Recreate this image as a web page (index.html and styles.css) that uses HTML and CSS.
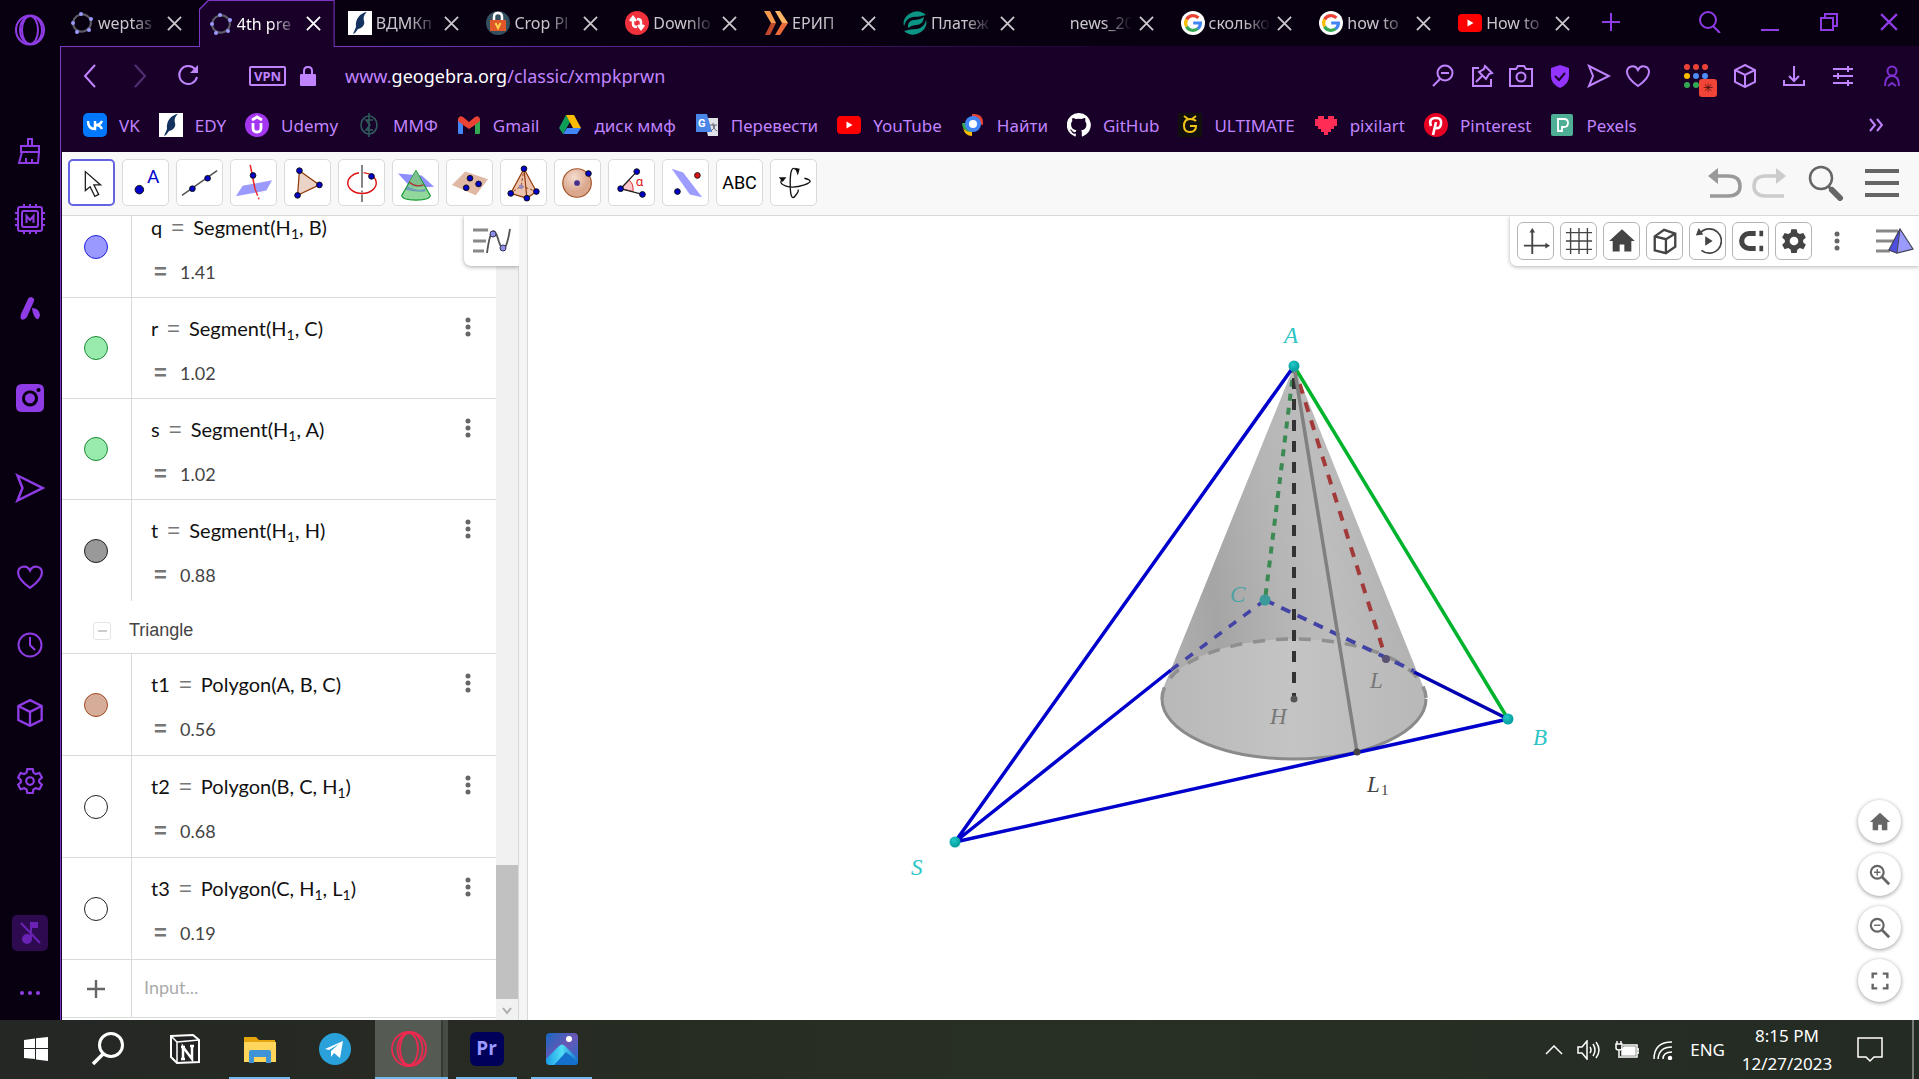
FILE: index.html
```html
<!DOCTYPE html>
<html lang="en">
<head>
<meta charset="utf-8">
<title>4th pre</title>
<link rel="stylesheet" href="styles.css">
</head>
<body>
<svg class="defs" aria-hidden="true">
  <symbol id="x" viewBox="0 0 16 16"><path d="M1 1l14 14M15 1L1 15"/></symbol>
  <symbol id="ring" viewBox="0 0 24 24"><ellipse cx="12" cy="12" rx="9" ry="8.500" fill="none" stroke="#5c5c66" stroke-width="2.200" transform="rotate(-15 12 12)"/><g fill="#9a9aff"><circle cx="11" cy="3" r="2"/><circle cx="21" cy="8" r="2"/><circle cx="19" cy="19" r="2"/><circle cx="7" cy="21" r="2"/><circle cx="3" cy="12" r="2"/></g></symbol>
  <symbol id="feather" viewBox="0 0 24 24"><path fill="#fff" d="M0 0h24v24H0z"/><path fill="#14325f" d="M19 1C12 2 7 8 8 16l-3 7 2-1 3-4c5-1 7-5 6-8-1-4 0-6 3-9z"/></symbol>
  <symbol id="google" viewBox="0 0 24 24"><circle cx="12" cy="12" r="12" fill="#fff"/><g fill="none" stroke-width="3.2"><path stroke="#ea4335" d="M5.6 8.4a7.4 7.4 0 0 1 11.8-1.6"/><path stroke="#fbbc05" d="M5.6 8.4a7.4 7.4 0 0 0 0 7.2"/><path stroke="#34a853" d="M5.6 15.6a7.4 7.4 0 0 0 11.2 2"/><path stroke="#4285f4" d="M12.2 12h7.2c0 2.400-1 4.400-2.700 5.700"/></g></symbol>
  <symbol id="youtube" viewBox="0 0 24 24"><rect y="3" width="24" height="18" rx="4" fill="red"/><path fill="#fff" d="M9.500 8.500v7l6-3.500z"/></symbol>
  <symbol id="plane" viewBox="0 0 24 24"><path d="M2 2l20 10L2 22l4-10z"/></symbol>
  <symbol id="heart" viewBox="0 0 24 24"><path d="M12 22C5 17 1 13 1 8c0-6 8-8 11-2 3-6 11-4 11 2 0 5-4 9-11 14z"/></symbol>
  <symbol id="cube" viewBox="0 0 24 24"><path d="M12 1l10 5v12l-10 5-10-5V6zM2 6l10 5 10-5M12 11v12"/></symbol>
  <symbol id="home" viewBox="0 0 24 24"><path d="M10 21v-6h4v6h6v-9h3L12 2 1 12h3v9z"/></symbol>
  <symbol id="dots" viewBox="0 0 6 20"><circle cx="3" cy="3" r="2.500"/><circle cx="3" cy="10" r="2.500"/><circle cx="3" cy="17" r="2.500"/></symbol>
  <symbol id="gear" viewBox="0 0 24 24"><path d="M9.500 1h5l.7 3.300 2.200 1.300 3.300-1 2.300 4.200-2.500 2.300v2l2.500 2.300-2.300 4.200-3.300-1-2.200 1.300-.7 3.300h-5l-.7-3.300-2.200-1.300-3.300 1L1 15.400l2.500-2.300v-2L1 8.800l2.300-4.200 3.300 1 2.200-1.300z"/></symbol>
</svg>

<div class="browser">
  <nav class="rail" aria-label="Sidebar">
    <button class="rail-top" aria-label="Opera menu"><svg width="32" height="32" viewBox="0 0 32 32"><ellipse cx="16" cy="16" rx="14" ry="14.500"/><ellipse cx="16" cy="16" rx="8" ry="14"/><ellipse cx="17" cy="16" rx="11" ry="14"/></svg></button>
    <div class="rail-group">
      <button aria-label="Cleaner"><svg width="26" height="26" viewBox="0 0 26 26"><path d="M11 8V1h4v7M4 8h18v6H4zM5 14L2 25h19l1-11M9 25v-5M15 25v-4"/></svg></button>
      <button aria-label="GX Control"><svg width="32" height="32" viewBox="0 0 32 32"><rect x="4" y="4" width="24" height="24" rx="2"/><rect x="8" y="8" width="16" height="16" rx="2"/><path d="M10 1v3M16 1v3M22 1v3M10 28v3M16 28v3M22 28v3M1 10h3M1 16h3M1 22h3M28 10h3M28 16h3M28 22h3M12.500 20v-7l3.500 4 3.500-4v7"/></svg></button>
    </div>
    <div class="rail-group apps">
      <button aria-label="Aria"><svg class="solid" width="24" height="26" viewBox="0 0 24 26"><path d="M13 2q4 1 3 4L9 22q-3 4-6 2-1-2 0-5L10 4q1-2 3-2zM14 13q7 0 8 7-1 5-3 4-4-2-5-11z"/></svg></button>
      <button aria-label="Instagram"><svg class="solid" width="28" height="28" viewBox="0 0 28 28"><path fill-rule="evenodd" d="M6 0h16q6 0 6 6v16q0 6-6 6H6q-6 0-6-6V6q0-6 6-6zm8 6.500a8 8 0 1 0 .1 0zm0 2.800a5 5 0 1 1-.1 0zM22.500 4a2 2 0 1 0 .1 0z"/></svg></button>
      <button aria-label="My Flow"><svg width="30" height="30"><use href="#plane"/></svg></button>
    </div>
    <div class="rail-group">
      <button aria-label="Favourites"><svg width="26" height="26"><use href="#heart"/></svg></button>
      <button aria-label="History"><svg width="26" height="26" viewBox="0 0 26 26"><circle cx="13" cy="13" r="11.500"/><path d="M13 5v8l5 5"/></svg></button>
      <button aria-label="Extensions"><svg width="28" height="28"><use href="#cube"/></svg></button>
      <button aria-label="Settings"><svg width="26" height="26" viewBox="0 0 24 24"><use href="#gear"/><circle cx="12" cy="12" r="3.500"/></svg></button>
    </div>
    <div class="rail-bottom">
      <button class="music" aria-label="Music off"><svg width="24" height="24" viewBox="0 0 24 24"><path d="M3 2l19 20"/><circle cx="9" cy="18" r="4" fill="currentColor"/><path fill="currentColor" d="M13 18V2h6v4h-6"/></svg></button>
      <button class="more" aria-label="More"><svg class="solid" width="24" height="8" viewBox="0 0 24 8"><circle cx="4" cy="4" r="2"/><circle cx="12" cy="4" r="2"/><circle cx="20" cy="4" r="2"/></svg></button>
    </div>
  </nav>

  <div class="window">
    <header class="tabstrip">
      <div class="tabs">
        <div class="tab"><svg><use href="#ring"/></svg><button class="title">weptas</button><button class="close" aria-label="Close tab"><svg><use href="#x"/></svg></button></div>
        <div class="tab active"><svg><use href="#ring"/></svg><button class="title">4th pre</button><button class="close" aria-label="Close tab"><svg><use href="#x"/></svg></button></div>
        <div class="tab"><svg><use href="#feather"/></svg><button class="title">ВДМКп</button><button class="close" aria-label="Close tab"><svg><use href="#x"/></svg></button></div>
        <div class="tab"><svg viewBox="0 0 24 24"><circle cx="12" cy="12" r="12" fill="#34505e"/><path d="M8 10V6q0-4 4-4t4 4v4" fill="none" stroke="#fff" stroke-width="2.500"/><rect x="4" y="9" width="16" height="11" fill="#e0582a"/><path d="M9.500 12l2.500 5 2.500-5" fill="none" stroke="#ffd34d" stroke-width="2"/></svg><button class="title">Crop Pl</button><button class="close" aria-label="Close tab"><svg><use href="#x"/></svg></button></div>
        <div class="tab"><svg viewBox="0 0 24 24"><circle cx="12" cy="12" r="12" fill="#f0313c"/><path d="M8 7v6q0 3 4 3M16 17v-6q0-3-4-3M5 10l3-4 3 4M13 14l3 4 3-4" fill="none" stroke="#fff" stroke-width="2.500"/></svg><button class="title">Downlo</button><button class="close" aria-label="Close tab"><svg><use href="#x"/></svg></button></div>
        <div class="tab"><svg viewBox="0 0 24 24"><path fill="#f59a4c" d="M0 0h6l6 12H7z"/><path fill="#c2492c" d="M7 12h5L6 24H1z"/><path fill="#ffb765" d="M11 0h5l8 12h-6z"/><path fill="#ed6a3a" d="M18 12h6l-8 12h-5z"/></svg><button class="title">ЕРИП</button><button class="close" aria-label="Close tab"><svg><use href="#x"/></svg></button></div>
        <div class="tab"><svg viewBox="0 0 24 24"><path fill="#0c9484" d="M23 4Q15-3 6 3-1 8 1 15q2-8 9-9 7 0 13-2zM1 20q8 7 17 1 7-5 5-12-2 8-9 9-7 0-13 2zM5 14q1-5 7-5 5 0 9-3-1 8-8 8-4 0-8 3z"/></svg><button class="title">Платеж</button><button class="close" aria-label="Close tab"><svg><use href="#x"/></svg></button></div>
        <div class="tab"><svg></svg><button class="title">news_20</button><button class="close" aria-label="Close tab"><svg><use href="#x"/></svg></button></div>
        <div class="tab"><svg><use href="#google"/></svg><button class="title">сколько</button><button class="close" aria-label="Close tab"><svg><use href="#x"/></svg></button></div>
        <div class="tab"><svg><use href="#google"/></svg><button class="title">how to</button><button class="close" aria-label="Close tab"><svg><use href="#x"/></svg></button></div>
        <div class="tab"><svg><use href="#youtube"/></svg><button class="title">How to</button><button class="close" aria-label="Close tab"><svg><use href="#x"/></svg></button></div>
      </div>
      <div class="window-controls">
        <button class="new-tab" aria-label="New tab"><svg width="18" height="18" viewBox="0 0 18 18"><path d="M9 0v18M0 9h18"/></svg></button>
        <button aria-label="Search tabs"><svg width="22" height="22" viewBox="0 0 22 22"><circle cx="9" cy="9" r="8"/><path d="M14 15l7 7"/></svg></button>
        <button aria-label="Minimise"><svg width="18" height="18" viewBox="0 0 18 18"><path d="M0 17h18"/></svg></button>
        <button aria-label="Restore"><svg width="18" height="18" viewBox="0 0 18 18"><path d="M1 5h12v12H1zM5 5V1h12v12h-4"/></svg></button>
        <button aria-label="Close"><svg width="18" height="18"><use href="#x"/></svg></button>
      </div>
    </header>

    <div class="content">
      <div class="address-bar">
        <button class="back" aria-label="Back"><svg width="24" height="24" viewBox="0 0 24 24"><path d="M17 1L7 12l10 11"/></svg></button>
        <button class="forward" aria-label="Forward"><svg width="24" height="24" viewBox="0 0 24 24"><path d="M7 1l10 11L7 23"/></svg></button>
        <button class="reload" aria-label="Reload"><svg width="24" height="24" viewBox="0 0 24 24"><path d="M19 5a9 9 0 1 0 2 8"/><path fill="currentColor" stroke="none" d="M22 1v8h-8z"/></svg></button>
        <button class="vpn">VPN</button>
        <svg class="lock" width="16" height="20" viewBox="0 0 16 20"><rect y="8" width="16" height="12" rx="1" fill="currentColor" stroke="none"/><path d="M4 9V5q0-4 4-4t4 4v4"/></svg>
        <a class="url" href="#">www.<b>geogebra.org</b>/classic/xmpkprwn</a>
        <div class="page-actions">
          <button aria-label="Zoom"><svg viewBox="0 0 24 24"><circle cx="14" cy="9" r="7.500"/><path d="M9 15l-7 7M10 9h8"/></svg></button>
          <button aria-label="Pin"><svg viewBox="0 0 24 24"><path d="M9 4H3v18h18v-7M15 2l7 7-3 1-3 5-7-7 5-3zM12 12l-6 6"/></svg></button>
          <button aria-label="Snapshot"><svg viewBox="0 0 24 24"><path d="M1 5h6l2-3h6l2 3h6v17H1z"/><circle cx="12" cy="13" r="4.500"/></svg></button>
          <button aria-label="Ad blocker" class="shield"><svg viewBox="0 0 24 24"><path fill="#9333ff" stroke="none" d="M12 1l9 3v8q0 8-9 12-9-4-9-12V4z"/><path stroke="#180028" d="M7 12l4 4 6-7"/></svg></button>
          <button aria-label="Send"><svg><use href="#plane"/></svg></button>
          <button aria-label="Bookmark"><svg><use href="#heart"/></svg></button>
        </div>
        <div class="extensions">
          <button class="apps-grid" aria-label="Apps"><svg viewBox="0 0 24 24" stroke="none"><g fill="#ea4335"><circle cx="3" cy="3" r="3"/><circle cx="12" cy="3" r="3"/><circle cx="21" cy="3" r="3"/></g><circle cx="3" cy="12" r="3" fill="#fbbc05"/><g fill="#4e8df5"><circle cx="12" cy="12" r="3"/><circle cx="21" cy="12" r="3"/></g><g fill="#34a853"><circle cx="3" cy="21" r="3"/><circle cx="12" cy="21" r="3"/></g></svg><span class="badge">✳</span></button>
          <button aria-label="Extensions"><svg><use href="#cube"/></svg></button>
          <button aria-label="Downloads"><svg viewBox="0 0 24 24"><path d="M12 2v15M7 12l5 5 5-5M2 16v5h20v-5"/></svg></button>
          <button aria-label="Easy setup"><svg viewBox="0 0 24 24"><path d="M2 5h20M2 12h20M2 19h20M17 2v6M7 9v6M17 16v6" /></svg></button>
          <button class="person" aria-label="Profile"><svg viewBox="0 0 24 24"><circle cx="12" cy="7" r="4.500"/><path d="M5 22q0-10 7-10t7 10M8 22l4-3 4 3"/></svg></button>
        </div>
      </div>

      <nav class="bookmarks" aria-label="Bookmarks">
        <a href="#"><svg viewBox="0 0 24 24"><rect width="24" height="24" rx="5" fill="#07f"/><path d="M5 8q0 8 7 8V8M19 8q-2 4-6 4 4 0 6 4" fill="none" stroke="#fff" stroke-width="2.500"/></svg>VK</a>
        <a href="#"><svg><use href="#feather"/></svg>EDY</a>
        <a href="#"><svg viewBox="0 0 24 24"><circle cx="12" cy="12" r="12" fill="#a435f0"/><path d="M8 10v5q0 4 4 4t4-4v-5M7 7l5-3 5 3" fill="none" stroke="#fff" stroke-width="2.800"/></svg>Udemy</a>
        <a href="#"><svg viewBox="0 0 24 24"><g fill="none" stroke="#2f5b5c" stroke-width="1.600"><ellipse cx="12" cy="12" rx="8" ry="9"/><path d="M12 0v24M16 7H9l4 5-4 5h7"/></g></svg>ММФ</a>
        <a href="#"><svg viewBox="0 0 24 24"><path fill="#4285f4" d="M1 7l5 3v11H2q-1 0-1-1z"/><path fill="#34a853" d="M18 10l5-3v13q0 1-1 1h-4z"/><path fill="#ea4335" d="M1 8V6q1-4 5-2l6 5 6-5q4-2 5 2v2l-5 4-6 4-6-4z"/></svg>Gmail</a>
        <a href="#"><svg viewBox="0 0 24 24"><path fill="#0f9d58" d="M8 2L1 15l4 6L12 9z"/><path fill="#fbbc05" d="M8 2h8l7 13h-8z"/><path fill="#4285f4" d="M5 21l4-6h14l-4 6z"/></svg>диск ммф</a>
        <a href="#"><svg viewBox="0 0 24 24"><path fill="#dfe3e8" d="M9 5h14v18H13z"/><path fill="#4a86e8" d="M1 1h11l5 18H1z"/><text class="glyph" x="3" y="14" fill="#fff">G</text><path d="M15 12h7M18 10v2q1 5 4 6M20 12q-1 4-4 6" fill="none" stroke="#667"/></svg>Перевести</a>
        <a href="#"><svg><use href="#youtube"/></svg>YouTube</a>
        <a href="#"><svg viewBox="0 0 24 24"><path fill="#ea4335" d="M11 1q12-1 11 11l-4-1q-1-6-7-7z"/><path fill="#34a853" d="M1 10h5q0 5 5 6v4Q1 18 1 10z"/><path fill="#fbbc05" d="M2 15q3 4 9 4v4Q4 23 2 15z"/><circle cx="12" cy="11" r="8" fill="#4285f4"/><circle cx="12" cy="11" r="4" fill="#fff"/></svg>Найти</a>
        <a href="#"><svg viewBox="0 0 24 24"><path fill="#fff" d="M12 0A12 12 0 0 0 8 23.400c.6.1.8-.3.8-.6v-2.200c-3.300.7-4-1.500-4-1.500-.6-1.400-1.400-1.800-1.400-1.800-1-.7.1-.7.1-.7 1.200.1 1.800 1.200 1.800 1.200 1.100 1.900 2.900 1.300 3.500 1 .1-.8.400-1.300.8-1.600-2.700-.3-5.500-1.300-5.500-5.900 0-1.300.5-2.400 1.300-3.200-.2-.4-.6-1.600.1-3.200 0 0 1-.3 3.300 1.200a11 11 0 0 1 6 0C17.100 4.700 18 5 18 5c.7 1.600.3 2.800.1 3.200.8.800 1.300 1.900 1.300 3.200 0 4.600-2.800 5.600-5.500 5.900.5.400.9 1.100.9 2.200v3.300c0 .3.200.7.8.6A12 12 0 0 0 12 0z"/></svg>GitHub</a>
        <a href="#"><svg viewBox="0 0 24 24"><path fill="#11100e" d="M0 0h24v24H0z"/><path d="M18 8q-2-2-6-2-6 0-6 7 0 6 6 6t6-6h-6M6 3l4 3M18 3l-4 3" fill="none" stroke="#f2c318" stroke-width="2"/></svg>ULTIMATE</a>
        <a href="#"><svg viewBox="0 0 24 24"><path fill="#ff2d55" d="M4 3h6v3h4V3h6v3h3v7h-3v3h-3v3h-3v3h-4v-3H7v-3H4v-3H1V6h3z"/></svg>pixilart</a>
        <a href="#"><svg viewBox="0 0 24 24"><circle cx="12" cy="12" r="12" fill="#e60023"/><path d="M7 13q-3-8 5-8 6 0 5 6-1 5-5 4l-1-1M12 9L9 22" fill="none" stroke="#fff" stroke-width="2.600"/></svg>Pinterest</a>
        <a href="#"><svg viewBox="0 0 24 24"><rect x="1" y="1" width="22" height="22" rx="2" fill="#4fae96"/><path d="M8 18V6h6q4 0 4 4t-4 4h-2v4z" fill="none" stroke="#fff" stroke-width="1.800"/></svg>Pexels</a>
        <button class="overflow" aria-label="More bookmarks"><svg width="14" height="14" viewBox="0 0 14 14"><path d="M1 1l5 6-5 6M8 1l5 6-5 6"/></svg></button>
      </nav>

      <main class="geogebra">
        <div class="toolbar">
          <div class="tools">
            <button class="tool selected" aria-label="Move"><svg viewBox="0 0 40 40"><path d="M13 8v20l5-4 5 10 4-2-5-10h7z" fill="#fff" stroke="#222" stroke-width="1.400"/></svg></button>
            <button class="tool" aria-label="Point"><svg viewBox="0 0 40 40"><circle cx="13" cy="27" r="4.500" class="pt"/><text x="21" y="20" class="tool-a">A</text></svg></button>
            <button class="tool" aria-label="Line"><svg viewBox="0 0 40 40"><path d="M1 33L38 7" stroke="#555" stroke-width="1.600"/><circle cx="12" cy="26" r="3" class="pt"/><circle cx="28" cy="15" r="3" class="pt"/></svg></button>
            <button class="tool" aria-label="Perpendicular line"><svg viewBox="0 0 40 40"><path d="M8 23l31-6-6 11-32 6z" fill="#9a9aff"/><path d="M16 1l5 25" stroke="#e22" stroke-width="1.600"/><path d="M21 26l5 13" stroke="#e22" stroke-width="1.400" stroke-dasharray="8 2 2 2"/><circle cx="19" cy="12" r="3" class="pt"/></svg></button>
            <button class="tool" aria-label="Polygon"><svg viewBox="0 0 40 40"><path d="M11 7l21 15L9 33z" fill="#ecd3c7" stroke="#933b0c" stroke-width="1.300"/><circle cx="11" cy="7" r="3" class="pt"/><circle cx="32" cy="22" r="3" class="pt"/><circle cx="9" cy="33" r="3" class="pt"/></svg></button>
            <button class="tool" aria-label="Circle with axis"><svg viewBox="0 0 40 40"><path d="M20 1v24M20 28v2M20 32v8" stroke="#555" stroke-width="1.500"/><ellipse cx="20" cy="20" rx="15" ry="11" fill="none" stroke="#d11" stroke-width="1.500" stroke-dasharray="58 5"/><circle cx="30" cy="13" r="3" class="pt"/></svg></button>
            <button class="tool" aria-label="Intersect surfaces"><svg viewBox="0 0 40 40"><path d="M1 10l25 2 13 12-24 1z" fill="#8f8fff"/><path d="M20 7L5 33q0 5 15 5t15-5z" fill="#7fd089" fill-opacity=".85" stroke="#159a2e" stroke-width="1.200"/><path d="M13 19l7-12 8 15q-8 5-15-3z" fill="#7fc08f"/><path d="M13 19q6 6 15 3" fill="none" stroke="#a33" stroke-width="1.400"/><path d="M11 23q8 6 19 3v3q-11 1-21-2z" fill="#5879c9" opacity=".6"/></svg></button>
            <button class="tool" aria-label="Plane through 3 points"><svg viewBox="0 0 40 40"><path d="M15 8l24 8-13 17-25-11z" fill="#dfb9a5"/><circle cx="20" cy="15" r="3" class="pt"/><circle cx="16" cy="25" r="3" class="pt"/><circle cx="29" cy="21" r="3" class="pt"/></svg></button>
            <button class="tool" aria-label="Pyramid"><svg viewBox="0 0 40 40"><path d="M20 5L6 31l17 5 10-7z" fill="#ecc4ae" stroke="#933b0c" stroke-width="1.300"/><path d="M20 5l3 31" stroke="#933b0c" stroke-width="1.300"/><path d="M20 5l-3 18-11 8M17 23l16 6" fill="none" stroke="#933b0c" stroke-dasharray="3 2"/><circle cx="17" cy="24" r="2.500" fill="#9a8ab8"/><circle cx="20" cy="5" r="3" class="pt"/><circle cx="6" cy="31" r="3" class="pt"/><circle cx="33" cy="29" r="3" class="pt"/><circle cx="23" cy="36" r="3" class="pt"/></svg></button>
            <button class="tool" aria-label="Sphere"><svg viewBox="0 0 40 40"><defs><radialGradient id="sph" cx=".4" cy=".3"><stop offset="0" stop-color="#f4ddd0"/><stop offset="1" stop-color="#dba88e"/></radialGradient></defs><circle cx="19" cy="20" r="15" fill="url(#sph)" stroke="#a4552b" stroke-width="1.300"/><circle cx="19" cy="20" r="3" fill="#43308c"/><circle cx="31" cy="10" r="3" class="pt"/></svg></button>
            <button class="tool" aria-label="Angle"><svg viewBox="0 0 40 40"><path d="M8 26l9-9q5 4 4 12z" fill="#fcc9cc" stroke="#d22"/><path d="M25 8L8 26l23 6" fill="none" stroke="#222" stroke-width="1.400"/><text x="24" y="23" class="alpha">α</text><circle cx="25" cy="8" r="3" class="pt"/><circle cx="8" cy="26" r="3" class="pt"/><circle cx="31" cy="32" r="3" class="pt"/></svg></button>
            <button class="tool" aria-label="Reflect about plane"><svg viewBox="0 0 40 40"><path d="M5 5l12 4 20 26-13-3z" fill="#9d9dff"/><circle cx="32" cy="12" r="3" fill="#d11" stroke="#222"/><circle cx="11" cy="29" r="3" class="pt"/></svg></button>
            <button class="tool abc">ABC</button>
            <button class="tool" aria-label="Rotate 3D view"><svg viewBox="0 0 40 40"><g fill="none" stroke="#111" stroke-width="1.400"><path d="M22 6q-6-6-6 14t5 14 3-7M8 16q-5 4 3 7t20-1 0-7"/></g><path d="M4 14h8l-4 5zM21 4l5 1-2 7z" fill="#111"/></svg></button>
          </div>
          <div class="main-actions">
            <button aria-label="Undo"><svg width="34" height="32" viewBox="0 0 34 32"><path d="M2 29h18q12 0 12-10T20 9H9" fill="none" stroke="#999" stroke-width="3.500"/><path d="M0 9l10-8v16z" fill="#999"/></svg></button>
            <button aria-label="Redo"><svg width="34" height="32" viewBox="0 0 34 32"><path d="M32 29H14Q2 29 2 19T14 9h11" fill="none" stroke="#ccc" stroke-width="3.500"/><path d="M34 9L24 1v16z" fill="#ccc"/></svg></button>
            <button class="find" aria-label="Search"><svg width="36" height="36" viewBox="0 0 36 36"><circle cx="13" cy="13" r="11" fill="none" stroke="#666" stroke-width="2.500"/><path d="M20 21l4 4" stroke="#666" stroke-width="3"/><path d="M24 25l8 8" stroke="#666" stroke-width="6" stroke-linecap="round"/></svg></button>
            <button aria-label="Menu"><svg width="34" height="30" viewBox="0 0 34 30"><path d="M0 3h34M0 15h34M0 27h34" stroke="#666" stroke-width="4"/></svg></button>
          </div>
        </div>

        <div class="views">
          <section class="algebra" aria-label="Algebra view">
            <div class="list">
              <ul class="rows">
                <li class="row segment"><div class="mark"><button class="marble blue" aria-label="Toggle q"></button></div><div class="expr"><p class="def">q <i>=</i> Segment(H<sub>1</sub>, B)</p><p class="val"><b>=</b>1.41</p></div></li>
                <li class="row segment"><div class="mark"><button class="marble green" aria-label="Toggle r"></button></div><div class="expr"><p class="def">r <i>=</i> Segment(H<sub>1</sub>, C)</p><p class="val"><b>=</b>1.02</p></div><button class="kebab" aria-label="More"><svg><use href="#dots"/></svg></button></li>
                <li class="row segment"><div class="mark"><button class="marble green" aria-label="Toggle s"></button></div><div class="expr"><p class="def">s <i>=</i> Segment(H<sub>1</sub>, A)</p><p class="val"><b>=</b>1.02</p></div><button class="kebab" aria-label="More"><svg><use href="#dots"/></svg></button></li>
                <li class="row segment last"><div class="mark"><button class="marble grey" aria-label="Toggle t"></button></div><div class="expr"><p class="def">t <i>=</i> Segment(H<sub>1</sub>, H)</p><p class="val"><b>=</b>0.88</p></div><button class="kebab" aria-label="More"><svg><use href="#dots"/></svg></button></li>
                <li class="group"><button class="collapse" aria-label="Collapse Triangle"></button><h2>Triangle</h2></li>
                <li class="row"><div class="mark"><button class="marble brown" aria-label="Toggle t1"></button></div><div class="expr"><p class="def">t1 <i>=</i> Polygon(A, B, C)</p><p class="val"><b>=</b>0.56</p></div><button class="kebab" aria-label="More"><svg><use href="#dots"/></svg></button></li>
                <li class="row"><div class="mark"><button class="marble" aria-label="Toggle t2"></button></div><div class="expr"><p class="def">t2 <i>=</i> Polygon(B, C, H<sub>1</sub>)</p><p class="val"><b>=</b>0.68</p></div><button class="kebab" aria-label="More"><svg><use href="#dots"/></svg></button></li>
                <li class="row"><div class="mark"><button class="marble" aria-label="Toggle t3"></button></div><div class="expr"><p class="def">t3 <i>=</i> Polygon(C, H<sub>1</sub>, L<sub>1</sub>)</p><p class="val"><b>=</b>0.19</p></div><button class="kebab" aria-label="More"><svg><use href="#dots"/></svg></button></li>
                <li class="row entry"><div class="mark"><button class="plus" aria-label="Add"><svg width="18" height="18" viewBox="0 0 18 18"><path d="M9 0v18M0 9h18" stroke="#666" stroke-width="2.400"/></svg></button></div><input type="text" placeholder="Input..." aria-label="Input"></li>
              </ul>
            </div>
            <div class="scrollbar"><div class="thumb"></div><svg width="10" height="8" viewBox="0 0 10 8"><path d="M1 1l4 5 4-5" fill="none" stroke="#aaa" stroke-width="2"/></svg></div>
            <button class="stylebar" aria-label="Style bar"><svg width="38" height="26" viewBox="0 0 38 26"><path d="M0 2h15M0 13h13M0 23h11" stroke="#888" stroke-width="3"/><path d="M14 25Q19-12 26 14 32 32 37 1" fill="none" stroke="#555" stroke-width="1.800"/><g fill="#8f8fe8" stroke="#335"><circle cx="20" cy="6" r="3"/><circle cx="30" cy="20" r="3"/></g></svg></button>
          </section>

          <section class="view3d" aria-label="3D graphics">
            <svg class="scene" viewBox="528 216 1391 804">
              <defs>
                <linearGradient id="side" gradientUnits="userSpaceOnUse" x1="1162" y1="700" x2="1426" y2="660"><stop offset="0" stop-color="#b2b2b2"/><stop offset=".25" stop-color="#a5a5a5"/><stop offset=".5" stop-color="#b5b5b5"/><stop offset=".7" stop-color="#bdbdbd"/><stop offset="1" stop-color="#b0b0b0"/></linearGradient>
                <linearGradient id="base"><stop offset="0" stop-color="#b8b8b8"/><stop offset=".5" stop-color="#c4c4c4"/><stop offset="1" stop-color="#b8b8b8"/></linearGradient>
                <radialGradient id="dot" cx=".4" cy=".35"><stop offset="0" stop-color="#22c9c9"/><stop offset="1" stop-color="#0aa3a3"/></radialGradient>
              </defs>
              <path fill="url(#side)" d="M1294 366L1163 689Q1294 740 1424 689z"/>
              <ellipse cx="1294" cy="699" rx="132" ry="60" fill="url(#base)"/>
              <g fill="none">
                <path d="M1162 699A132 60 0 0 1 1426 699" stroke="#8f8f8f" stroke-width="3.500" stroke-dasharray="12 11"/>
                <path d="M1265 600L1171 670" stroke="#4343a5" stroke-width="3.500" stroke-dasharray="9 9"/>
                <path d="M1265 600L1414 671" stroke="#4343a5" stroke-width="4" stroke-dasharray="10 8"/>
                <path d="M1294 366L1265 600" stroke="#3c8a53" stroke-width="4" stroke-dasharray="7 7"/>
                <path d="M1294 366L1386 659" stroke="#a33a3a" stroke-width="4" stroke-dasharray="10 9"/>
                <path d="M1294 378V699" stroke="#333" stroke-width="4" stroke-dasharray="11 10"/>
                <path d="M1162 699A132 60 0 0 0 1426 699" stroke="#8a8a8a" stroke-width="3"/>
                <path d="M1171 670L955 842L1294 366M955 842L1508 719" stroke="#0000cd" stroke-width="3.500"/>
                <path d="M1414 672L1508 719" stroke="#0000b0" stroke-width="3.500"/>
                <path d="M1294 366L1508 719" stroke="#00b32d" stroke-width="3.500"/>
                <path d="M1294 366L1357 752" stroke="#808080" stroke-width="3.500"/>
              </g>
              <g fill="url(#dot)"><circle cx="1294" cy="366" r="5.500"/><circle cx="955" cy="842" r="5.500"/><circle cx="1508" cy="719" r="5.500"/></g>
              <circle cx="1265" cy="600" r="5.500" fill="#3c9a9a"/><circle cx="1386" cy="659" r="4" fill="#5a5273"/><circle cx="1294" cy="699" r="3.500" fill="#555"/><circle cx="1357" cy="752" r="3.500" fill="#444"/>
              <g class="labels"><text x="1284" y="343">A</text><text x="1533" y="745">B</text><text x="911" y="875">S</text><text class="dim" x="1230" y="602">C</text><text class="in" x="1270" y="724">H</text><text class="in" x="1370" y="688">L</text><text class="out" x="1367" y="792">L</text><text class="out sub" x="1381" y="795">1</text></g>
            </svg>
            <div class="bar3d">
              <button aria-label="Axes"><svg viewBox="0 0 30 30"><path d="M11 3v26M2 20h25" stroke="#444" stroke-width="2"/><path d="M8 6l3-5 3 5zM25 17l5 3-5 3z" fill="#444"/></svg></button>
              <button aria-label="Grid"><svg viewBox="0 0 30 30"><path d="M6 1v28M15 1v28M24 1v28M1 6h28M1 15h28M1 24h28" stroke="#444" stroke-width="1.500"/></svg></button>
              <button aria-label="Home"><svg viewBox="0 0 24 24" fill="#444"><use href="#home"/></svg></button>
              <button aria-label="View direction"><svg viewBox="0 0 30 30"><path d="M4 10l10-7 12 4v14l-10 7L4 25zM4 10l12 3 10-6M16 13v15" fill="none" stroke="#444" stroke-width="2.500"/></svg></button>
              <button aria-label="Rotate"><svg viewBox="0 0 30 30"><path d="M7 6a13 13 0 1 1 1 19" fill="none" stroke="#444" stroke-width="1.800"/><path d="M2 9l3-8 5 7zM12 10l8 5-8 5z" fill="#444"/></svg></button>
              <button aria-label="Snap"><svg viewBox="0 0 30 30"><path d="M20 7h-7a8 8 0 0 0 0 16h7" fill="none" stroke="#444" stroke-width="5.500"/><path d="M24 4h4v6h-4zM24 20h4v6h-4z" fill="#444"/></svg></button>
              <button aria-label="Settings"><svg viewBox="0 0 26 26" fill="#444"><use href="#gear" x="1" y="1" width="24" height="24"/><circle cx="13" cy="13" r="4" fill="#fff"/></svg></button>
              <button class="plain" aria-label="More"><svg><use href="#dots"/></svg></button>
              <button class="plain pyramid" aria-label="Style bar"><svg viewBox="0 0 38 26"><path d="M0 3h22M0 13h18M0 23h14" stroke="#888" stroke-width="3"/><path d="M24 1L13 22l8 3 16-4z" fill="#9a9aff" stroke="#445" stroke-width="1.200"/><path d="M24 1L13 22l8 3z" fill="#5050e0" stroke="#445"/></svg></button>
            </div>
            <div class="fabs">
              <button aria-label="Home view"><svg viewBox="0 0 24 24"><use href="#home"/></svg></button>
              <button aria-label="Zoom in"><svg viewBox="0 0 24 24"><g fill="none" stroke="#666"><circle cx="9" cy="9" r="7" stroke-width="2.400"/><path d="M14 14l8 8" stroke-width="3"/><path d="M5.500 9h7M9 5.500v7" stroke-width="1.500"/></g></svg></button>
              <button aria-label="Zoom out"><svg viewBox="0 0 24 24"><g fill="none" stroke="#666"><circle cx="9" cy="9" r="7" stroke-width="2.400"/><path d="M14 14l8 8" stroke-width="3"/><path d="M5.500 9h7" stroke-width="1.500"/></g></svg></button>
              <button aria-label="Full screen"><svg viewBox="0 0 24 24"><path d="M4 9V4h5M15 4h5v5M20 15v5h-5M9 20H4v-5" fill="none" stroke="#666" stroke-width="2.600"/></svg></button>
            </div>
          </section>
        </div>
      </main>
    </div>
  </div>
</div>

<footer class="taskbar">
  <div class="launchers">
    <button aria-label="Start"><svg width="24" height="24" viewBox="0 0 24 24"><path fill="#fff" d="M0 3l11-1.500V11H0zM12 1.300L24 0v11H12zM0 12h11v10L0 21zM12 12h12v12l-12-1.500z"/></svg></button>
    <button aria-label="Search"><svg width="34" height="34" viewBox="0 0 34 34"><circle cx="20" cy="13" r="11.500" fill="none" stroke="#fff" stroke-width="3"/><path d="M12 22L2 32" stroke="#fff" stroke-width="3.500"/></svg></button>
    <button aria-label="Notion"><svg width="30" height="30" viewBox="0 0 30 30"><path fill="#222" stroke="#fff" stroke-width="2" d="M1 2l22-1 6 5v22l-22 1-6-6z"/><path d="M1 2l6 6v21M7 8l22-2" fill="none" stroke="#fff" stroke-width="1.500"/><path d="M13 25V13l9 12V12M11 13h4M20 12h4M11 25h4" stroke="#fff" stroke-width="2.500" fill="none"/></svg></button>
    <button class="open" aria-label="File Explorer"><svg width="32" height="28" viewBox="0 0 32 28"><path fill="#e5a50f" d="M0 2h12l3 3h16v6H0z"/><path fill="#ffd65c" d="M0 7h32v20H0z"/><path fill="#3f94d8" d="M5 28V17q0-2 2-2h18q2 0 2 2v11h-5v-6H10v6z"/></svg></button>
    <button class="telegram" aria-label="Telegram"><svg width="32" height="32" viewBox="0 0 32 32"><circle cx="16" cy="16" r="16" fill="#2aa1da"/><path fill="#fff" d="M6 16l18-8-3 17-6-5-3 4v-6l8-7-10 6z"/></svg></button>
    <button class="open current" aria-label="Opera GX"><svg width="38" height="38" viewBox="0 0 38 38"><g fill="none" stroke="#ee2950" stroke-width="1.800"><circle cx="19" cy="19" r="17"/><ellipse cx="19" cy="19" rx="9" ry="16"/><ellipse cx="20" cy="19" rx="12.500" ry="16.500"/></g></svg></button>
    <button class="open" aria-label="Premiere Pro"><span class="pr">Pr</span></button>
    <button class="open" aria-label="Photos"><svg width="32" height="32" viewBox="0 0 32 32"><defs><linearGradient id="ph" x2="1" y2="1"><stop offset="0" stop-color="#1668c0"/><stop offset=".5" stop-color="#6b57b5"/><stop offset="1" stop-color="#1a6fd0"/></linearGradient><linearGradient id="mt" x2="1"><stop offset="0" stop-color="#1b9be8"/><stop offset=".5" stop-color="#50dcf5"/><stop offset="1" stop-color="#1672d0"/></linearGradient></defs><rect width="32" height="32" rx="4" fill="url(#ph)"/><path fill="url(#mt)" d="M0 26l13-13q3-3 6 0l13 13v2q0 4-4 4H4q-4 0-4-4z"/><path fill="#1470cc" d="M8 32l12-13 12 10q0 3-4 3z"/><circle cx="23" cy="6" r="3" fill="#fff"/></svg></button>
  </div>
  <div class="tray">
    <svg width="18" height="10" viewBox="0 0 18 10"><path d="M1 9l8-8 8 8"/></svg>
    <svg width="24" height="20" viewBox="0 0 24 20"><path d="M1 7h4l5-6v18l-5-6H1zM13 7q2 3 0 6M16 4q4 6 0 12M19 2q6 8 0 16"/></svg>
    <svg width="24" height="18" viewBox="0 0 24 18"><path d="M8 4h14v12H5M22 8h2v4h-2"/><path fill="#fff" d="M9 6h11v8H7v-4z"/><path fill="#252b24" d="M1 3h6v4q0 2-3 2T1 7zM4 9v8M2 0v3M6 0v3"/></svg>
    <svg width="20" height="20" viewBox="0 0 20 20"><path d="M1 19Q1 2 19 2M5 19Q6 7 19 7M10 19q0-7 9-7"/><circle cx="17" cy="18" r="1.500" fill="#fff"/></svg>
    <span class="lang">ENG</span>
    <time class="clock">8:15 PM<br>12/27/2023</time>
    <svg width="26" height="26" viewBox="0 0 26 26"><path d="M1 1h24v19h-8l-4 4-4-4H1z"/></svg>
    <span class="desktop-edge"></span>
  </div>
</footer>
</body>
</html>
```
FILE: styles.css
```css
* { box-sizing: border-box; }
:root {
  --rail: #080010;
  --chrome: #180028;
  --line: #7b35c4;
  --purple: #8f3ce6;
  --lilac: #c084ff;
}
body {
  margin: 0;
  height: 100vh;
  display: flex;
  flex-direction: column;
  overflow: hidden;
  font-family: "Noto Sans", "Open Sans", sans-serif;
  font-size: 16px;
}
button {
  display: flex;
  align-items: center;
  justify-content: center;
  padding: 0;
  border: 0;
  background: none;
  color: inherit;
  font: inherit;
}
a { color: inherit; text-decoration: none; }
svg { display: block; flex: none; }
.defs { position: absolute; width: 0; height: 0; }

.browser { flex: 1; min-height: 0; display: flex; }

/* left rail */
.rail {
  width: 60px;
  flex: none;
  display: flex;
  flex-direction: column;
  background: var(--rail);
  color: var(--purple);
}
.rail svg { fill: none; stroke: currentColor; stroke-width: 2; }
.rail svg.solid { fill: currentColor; stroke: none; }
.rail button { width: 60px; height: 68px; }
.rail .rail-top { height: 60px; margin-bottom: 57px; }
.rail-group { display: flex; flex-direction: column; margin-bottom: 10px; }
.rail .apps button { height: 90px; }
.rail-bottom { margin-top: auto; display: flex; flex-direction: column; align-items: center; }
.rail .music { width: 36px; height: 36px; border-radius: 5px; background: #2e0b50; color: #6a22b5; }
.rail .more { height: 69px; padding-top: 15px; }

.window { flex: 1; min-width: 0; display: flex; flex-direction: column; }

/* tab strip */
.tabstrip { height: 46px; flex: none; display: flex; background: var(--rail); }
.tabs { flex: 1; min-width: 0; display: flex; }
.tab {
  position: relative;
  flex: 1;
  min-width: 0;
  height: 46px;
  display: flex;
  align-items: center;
  padding: 0 17px 0 10px;
  color: #c9c6cc;
}
.tab > * { position: relative; }
.tab > svg { width: 24px; height: 24px; margin-right: 4px; }
.title {
  flex: 1;
  min-width: 0;
  justify-content: flex-start;
  overflow: hidden;
  white-space: nowrap;
  margin-right: 4px;
  -webkit-mask-image: linear-gradient(90deg, #000 34px, transparent 62px);
  mask-image: linear-gradient(90deg, #000 34px, transparent 62px);
}
.close svg { width: 15px; height: 15px; stroke: currentColor; stroke-width: 2; }
.tab.active { height: 47px; color: #fff; z-index: 1; }
.tab.active::before, .tab.active::after {
  content: "";
  position: absolute;
  inset: 0 3px 0 0;
  background: var(--line);
  clip-path: polygon(0 9px, 9px 0, 100% 0, 100% 100%, 0 100%);
  z-index: -2;
}
.tab.active::after { inset: 1px 4px 0 1px; background: var(--chrome); z-index: -1; }
.window-controls { width: 332px; flex: none; display: flex; align-items: center; color: var(--purple); padding-bottom: 2px; }
.window-controls button { width: 60px; height: 40px; }
.window-controls .new-tab { width: 48px; margin-right: 45px; }
.window-controls svg { fill: none; stroke: currentColor; stroke-width: 2; }

.content {
  flex: 1;
  min-height: 0;
  display: flex;
  flex-direction: column;
  border-left: 1px solid var(--line);
  padding-left: 1px;
  background: linear-gradient(90deg, var(--line) 15%, transparent 58%) 0 0 / 100% 1px no-repeat, var(--chrome);
}

/* address bar */
.address-bar { height: 58px; flex: none; margin-top: 1px; display: flex; align-items: center; padding: 0 15px 0 16px; color: var(--lilac); }
.address-bar svg { fill: none; stroke: currentColor; stroke-width: 2; }
.back { margin-right: 26px; }
.forward { margin-right: 24px; opacity: .35; }
.reload { margin-right: 49px; }
.vpn { width: 37px; height: 20px; border: 2px solid var(--lilac); border-radius: 2px; font: 700 13px "Noto Sans", sans-serif; margin-right: 14px; }
.lock { margin-right: 29px; }
.url { flex: 1; font-size: 18px; }
.url b { font-weight: 400; color: #fff; }
.page-actions, .extensions { display: flex; align-items: center; }
.page-actions { gap: 15px; margin-right: 34px; }
.extensions { gap: 25px; }
.page-actions svg, .extensions svg { width: 24px; height: 24px; stroke-width: 2; }
.apps-grid { position: relative; }
.address-bar .apps-grid svg { stroke: none; }
.badge { position: absolute; left: 15px; top: 15px; width: 18px; height: 18px; border-radius: 3px; background: #f04438; color: #501010; font-size: 12px; line-height: 18px; }
.person { color: #7d2fd0; }

/* bookmarks */
.bookmarks { height: 47px; flex: none; display: flex; align-items: center; gap: 19px; padding: 0 36px 7px 21px; font-size: 17px; color: var(--lilac); white-space: nowrap; }
.bookmarks a { display: flex; align-items: center; gap: 12px; }
.bookmarks a svg { width: 24px; height: 24px; }
.glyph { font: 700 11px "Roboto", sans-serif; }
.overflow { margin-left: auto; }
.overflow svg { fill: none; stroke: currentColor; stroke-width: 2; }

/* GeoGebra */
.geogebra { flex: 1; min-height: 0; display: flex; flex-direction: column; background: #fff; }
.toolbar { height: 64px; flex: none; display: flex; justify-content: space-between; align-items: center; padding: 0 20px 2px 6px; background: #f8f8f8; border-bottom: 1px solid #d8d8d8; }
.tools { display: flex; gap: 7px; }
.tool { width: 47px; height: 47px; border: 1px solid #dadada; border-radius: 5px; background: #fff; }
.tool.selected { border: 2px solid #6464e0; }
.tool svg { width: 38px; height: 38px; }
.tool .pt { fill: #0000c8; stroke: #111; }
.tool-a { font: 20px "Roboto", sans-serif; fill: #00c; }
.alpha { font: 14px "Roboto", sans-serif; fill: #d22; }
.tool.abc { font: 18px "Roboto", sans-serif; color: #000; }
.main-actions { display: flex; align-items: center; gap: 10px; }
.main-actions .find { margin: 0 11px 0 12px; }

.views { flex: 1; min-height: 0; display: flex; }
.algebra { position: relative; width: 466px; flex: none; display: flex; background: #f5f5f5; border-right: 1px solid #d8d8d8; }
.list { flex: 1; display: flex; flex-direction: column; justify-content: flex-end; overflow: hidden; background: #fff; }
.rows { list-style: none; margin: 0; padding: 0 0 2px; }
.row { position: relative; height: 102px; display: flex; border-bottom: 1px solid #dadada; }
.row.segment { height: 101px; }
.row.last { border-bottom: 0; }
.mark { width: 70px; flex: none; display: flex; align-items: center; justify-content: center; padding-right: 2px; border-right: 1px solid #dadada; }
.marble { width: 24px; height: 24px; border: 1px solid #222; border-radius: 50%; background: #fff; }
.blue { background: #9999ff; border-color: #2222dd; }
.green { background: #99ebad; border-color: #1e8a38; }
.grey { background: #999; }
.brown { background: #d6ad99; border-color: #a04a20; }
.expr { padding: 14px 0 0 19px; font-family: Lato, sans-serif; }
.expr p { margin: 0; }
.def { height: 32px; font-size: 20px; line-height: 32px; color: #111; white-space: pre; }
.def i { font: 22px/20px "Liberation Sans", sans-serif; color: #777; margin: 0 4px; }
.def sub { font-size: 14px; line-height: 0; vertical-align: -4px; }
.val { padding: 15px 0 0 3px; font-size: 18px; line-height: 28px; color: #444; }
.val b { display: inline-block; width: 26px; font: 700 22px/20px "Liberation Sans", sans-serif; color: #777; }
.kebab { position: absolute; right: 25px; top: 19px; }
.kebab svg { width: 6px; height: 20px; fill: #666; }
.group { height: 53px; display: flex; align-items: center; padding: 8px 0 0 31px; border-bottom: 1px solid #dadada; }
.collapse { width: 18px; height: 18px; border: 1px solid #e4e4e4; border-radius: 3px; margin-right: 18px; }
.collapse::before { content: ""; width: 9px; height: 2px; background: #ccc; }
.group h2 { margin: 0; padding-bottom: 3px; font: 18px/24px "Liberation Sans", sans-serif; color: #444; }
.row.entry { height: 58px; }
.entry input { flex: 1; min-width: 0; border: 0; outline: 0; padding: 0 12px 4px; font: 18px Lato, sans-serif; }
.entry input::placeholder { color: #aaa; opacity: 1; }
.scrollbar { width: 22px; flex: none; display: flex; flex-direction: column; align-items: center; justify-content: flex-end; background: #f1f1f1; padding-bottom: 5px; }
.scrollbar .thumb { width: 22px; height: 134px; background: #c1c1c1; margin-bottom: 8px; }
.algebra::after { content: ""; width: 8px; flex: none; border-left: 1px solid #d8d8d8; }
.stylebar { position: absolute; right: 8px; top: 0; width: 55px; height: 50px; background: #fff; border-radius: 0 0 0 7px; box-shadow: 0 1px 4px rgba(0, 0, 0, .35); clip-path: inset(0 0 -5px -5px); }

.view3d { position: relative; flex: 1; min-width: 0; overflow: hidden; }
.scene { width: 100%; height: 100%; }
.labels { font: italic 23px "Liberation Serif", serif; fill: #2cc4c4; }
.labels .dim { fill: #4fa3a3; }
.labels .in { fill: #777; }
.labels .out { fill: #444; }
.labels .sub { font-style: normal; font-size: 15px; }
.bar3d { position: absolute; top: 0; right: 0; height: 50px; display: flex; align-items: center; gap: 6px; padding: 0 5px 0 7px; background: #fff; border-radius: 0 0 0 7px; box-shadow: 0 1px 4px rgba(0, 0, 0, .3); clip-path: inset(0 0 -5px -5px); }
.bar3d button { width: 37px; height: 38px; border: 1px solid #b5b5b5; border-radius: 6px; }
.bar3d button svg { width: 28px; height: 28px; }
.bar3d .plain { border: 0; }
.bar3d .plain svg { width: 6px; height: 20px; fill: #666; }
.bar3d .pyramid { margin-left: 15px; width: 38px; }
.bar3d .pyramid svg { width: 38px; height: 26px; fill: none; }
.fabs { position: absolute; right: 18px; bottom: 18px; display: flex; flex-direction: column; gap: 10px; }
.fabs button { width: 43px; height: 43px; border-radius: 50%; background: #fff; box-shadow: 0 1px 4px rgba(0, 0, 0, .4); }
.fabs svg { width: 22px; height: 22px; fill: #666; }

/* taskbar */
.taskbar { height: 59px; flex: none; display: flex; justify-content: space-between; background: linear-gradient(90deg, #242724, #272b23 25%, #283024 60%, #242b24); color: #fff; }
.launchers { display: flex; padding-left: 1px; }
.launchers button { width: 61px; height: 59px; margin-right: 14px; border-bottom: 2px solid transparent; }
.launchers button:first-child { width: 70px; margin-right: 0; }
.launchers button:nth-child(2) { width: 74px; margin-right: 9px; }
.launchers .telegram { margin-right: 10px; }
.launchers .open { border-bottom-color: #76b9ed; }
.launchers .current { width: 73px; margin: 0 8px 0 0; background: linear-gradient(90deg, #555a53 66px, #353a33 66px, #353a33 68px, #474c45 68px); padding-right: 5px; }
.pr { width: 34px; height: 34px; border-radius: 6px; background: #00005b; color: #9999ff; font: 700 19px/32px "Open Sans", sans-serif; text-align: center; }
.tray { display: flex; align-items: center; font-size: 17px; }
.tray svg { fill: none; stroke: #fff; stroke-width: 1.5px; margin-right: 14px; }
.lang { margin: 0 14px 0 3px; }
.clock { width: 96px; margin-right: 22px; line-height: 28px; text-align: center; }
.tray .desktop-edge { align-self: stretch; width: 2px; margin: 0 5px 0 15px; background: #777b76; }
```
